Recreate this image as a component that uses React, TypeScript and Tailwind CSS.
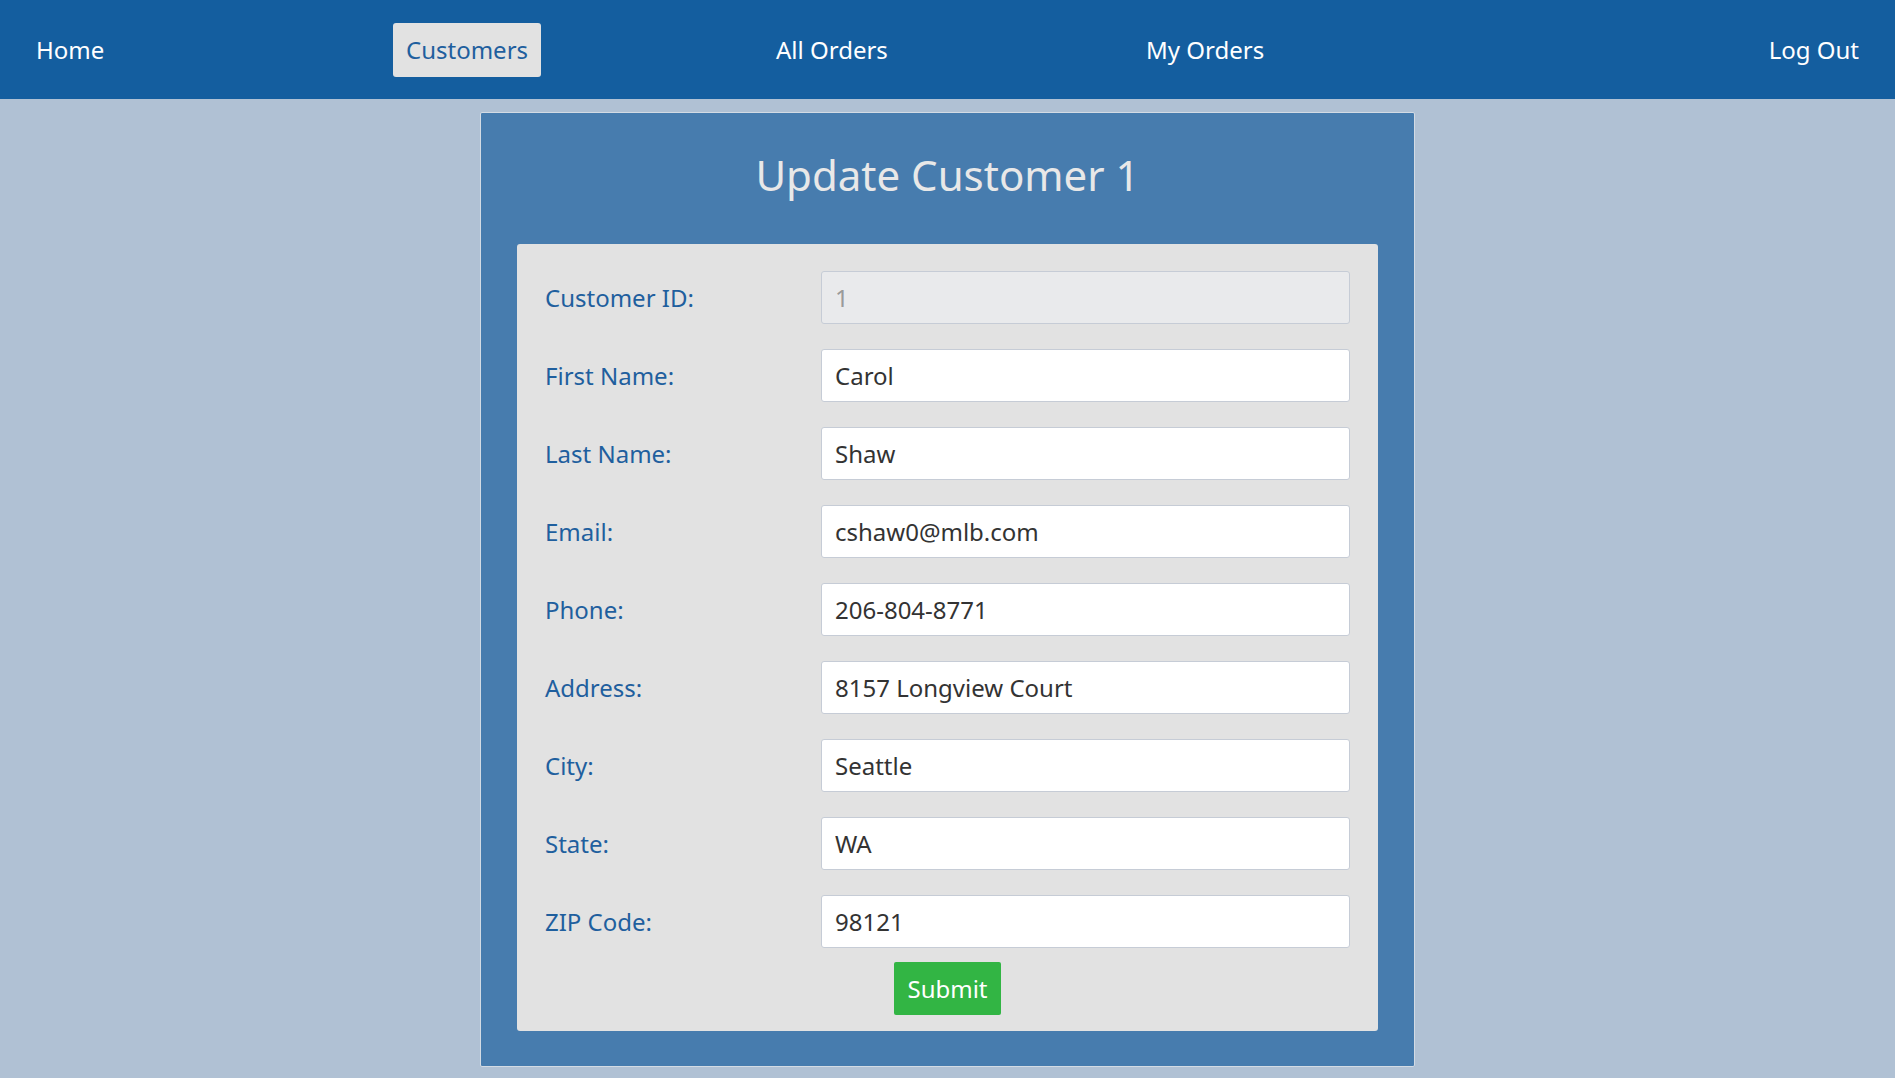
import React from 'react';

const fields = [
    { label: 'Customer ID:', value: '1', disabled: true },
    { label: 'First Name:', value: 'Carol' },
    { label: 'Last Name:', value: 'Shaw' },
    { label: 'Email:', value: 'cshaw0@mlb.com' },
    { label: 'Phone:', value: '206-804-8771' },
    { label: 'Address:', value: '8157 Longview Court' },
    { label: 'City:', value: 'Seattle' },
    { label: 'State:', value: 'WA' },
    { label: 'ZIP Code:', value: '98121' },
];

const App: React.FC = () => {
    return (
        <div className="min-h-screen bg-[#b0c1d4] font-['Noto_Sans',sans-serif]">
            {/* Top nav */}
            <nav className="h-[99px] bg-[#145e9f] flex items-center pl-[36px] pr-[36px] text-[24px] text-white">
                <div className="w-[357px]">Home</div>
                <div className="w-[383px]">
                    <span className="inline-flex items-center h-[54px] px-[13px] bg-[#e2e2e2] text-[#1f5f9e] rounded-[3px]">
                        Customers
                    </span>
                </div>
                <div className="w-[370px]">All Orders</div>
                <div>My Orders</div>
                <div className="ml-auto">Log Out</div>
            </nav>

            {/* Card */}
            <div className="mx-auto mt-[13px] w-[935px] bg-[#477cae] border border-[#d3dbe4] rounded-[2px] px-[36px] pb-[35px]">
                <h1 className="pt-[35px] mb-[42px] text-center text-[42px] leading-[54px] text-[#e8e8e8]">
                    Update Customer 1
                </h1>

                <div className="bg-[#e2e2e2] rounded-[3px] px-[28px] pt-[27px] pb-[16px]">
                    <div className="flex flex-col gap-[25px]">
                        {fields.map((f) => (
                            <div key={f.label} className="flex items-center">
                                <label className="w-[276px] text-[24px] text-[#1f5f9e]">{f.label}</label>
                                <input
                                    readOnly
                                    value={f.value}
                                    disabled={f.disabled}
                                    className={`flex-1 h-[53px] px-[13px] rounded-[3px] border border-[#c6ccd6] text-[24px] outline-none ${
                                        f.disabled ? 'bg-[#e9eaec] text-[#9a9a9a]' : 'bg-white text-[#333]'
                                    }`}
                                />
                            </div>
                        ))}
                    </div>
                    <div className="flex justify-center mt-[14px]">
                        <button className="h-[53px] w-[107px] bg-[#32b544] text-white text-[24px] rounded-[2px]">
                            Submit
                        </button>
                    </div>
                </div>
            </div>
        </div>
    );
};

export default App;
